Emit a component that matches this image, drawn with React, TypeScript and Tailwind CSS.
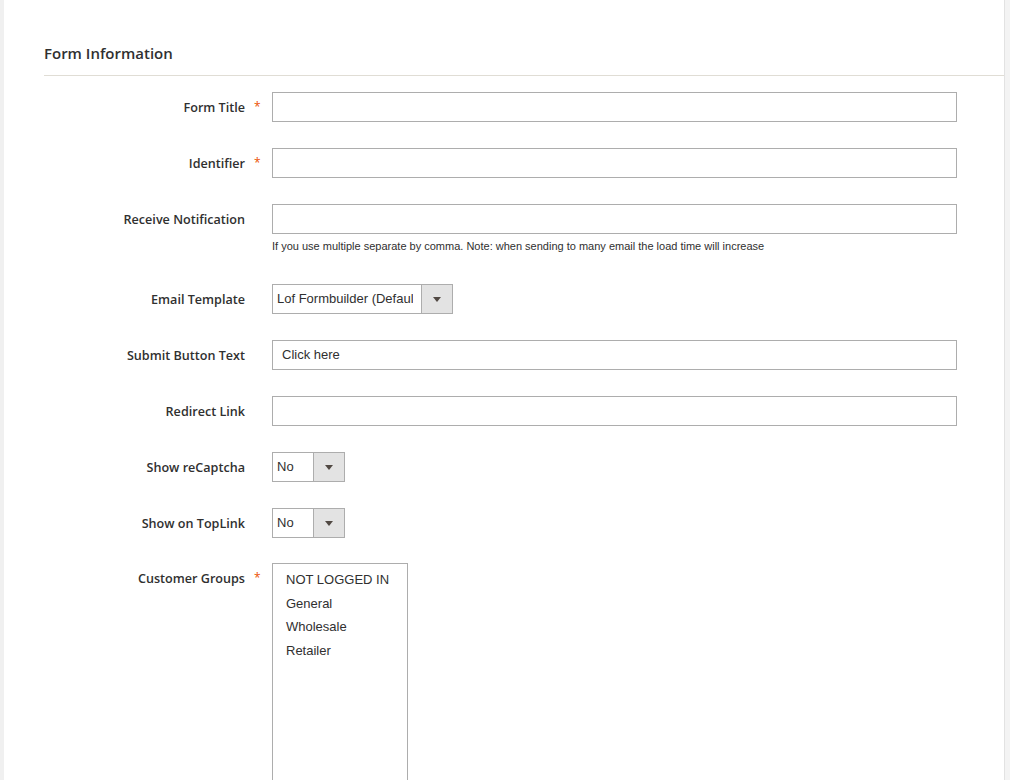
const labelFont = { fontFamily: '"Open Sans", "Liberation Sans", sans-serif' };

const Star = () => (
  <span className="text-[#eb5202] text-[12px] leading-[30px]" style={labelFont}>
    *
  </span>
);

const Row = ({
  label,
  required,
  children,
}: {
  label: string;
  required?: boolean;
  children: React.ReactNode;
}) => (
  <div className="flex items-start">
    <div
      className="w-[201px] h-[30px] pt-px text-right text-[12.6px] font-semibold leading-[30px] text-[#303030] whitespace-nowrap"
      style={labelFont}
    >
      {label}
    </div>
    <div className="w-[27px] pl-[9px] h-[30px]">{required && <Star />}</div>
    <div className="flex-1">{children}</div>
  </div>
);

const TextInput = ({ value }: { value?: string }) => (
  <div className="w-[685px] h-[30px] border border-[#adadad] bg-white pl-[9px] text-[13px] leading-[28px] text-[#303030] font-['Liberation_Sans',Arial,sans-serif]">
    {value}
  </div>
);

const Select = ({ value, width }: { value: string; width: string }) => (
  <div
    className={`${width} h-[30px] flex border border-[#adadad] bg-white text-[13px] text-[#303030] font-['Liberation_Sans',Arial,sans-serif]`}
  >
    <div className="flex-1 min-w-0 ml-[4px] mr-[8px] leading-[28px] overflow-hidden whitespace-nowrap">
      {value}
    </div>
    <div className="w-[31px] shrink-0 bg-[#e3e3e3] border-l border-[#adadad] flex items-center justify-center">
      <svg width="8" height="5" viewBox="0 0 8 5">
        <path d="M0 0 L8 0 L4 5 Z" fill="#514943" />
      </svg>
    </div>
  </div>
);

export default function App() {
  return (
    <div className="flex min-h-screen bg-white">
      <div className="w-[4px] bg-[#f0f0f0] shrink-0" />
      <div className="flex-1 pt-[43px]">
        <div className="ml-[40px] pb-[12px] border-b border-[#e0ddd5]">
          <h2
            className="text-[15px] font-semibold leading-[20px] text-[#303030]"
            style={labelFont}
          >
            Form Information
          </h2>
        </div>
        <div className="ml-[40px] pt-[16px] flex flex-col gap-[26px]">
          <Row label="Form Title" required>
            <TextInput />
          </Row>
          <Row label="Identifier" required>
            <TextInput />
          </Row>
          <Row label="Receive Notification">
            <TextInput />
            <div className="h-[24px] pt-[5px] text-[11px] leading-[14px] text-[#303030] font-['Liberation_Sans',Arial,sans-serif]">
              If you use multiple separate by comma. Note: when sending to many email the load time will increase
            </div>
          </Row>
          <Row label="Email Template">
            <Select value="Lof Formbuilder (Default)" width="w-[181px]" />
          </Row>
          <Row label="Submit Button Text">
            <TextInput value="Click here" />
          </Row>
          <Row label="Redirect Link">
            <TextInput />
          </Row>
          <Row label="Show reCaptcha">
            <Select value="No" width="w-[73px]" />
          </Row>
          <Row label="Show on TopLink">
            <Select value="No" width="w-[73px]" />
          </Row>
          <div className="-mt-px">
            <Row label="Customer Groups" required>
              <div className="w-[136px] h-[240px] border border-[#adadad] bg-white pt-[4px] pl-[13px] text-[13px] text-[#303030] font-['Liberation_Sans',Arial,sans-serif]">
                {["NOT LOGGED IN", "General", "Wholesale", "Retailer"].map((g) => (
                  <div key={g} className="leading-[23.5px]">
                    {g}
                  </div>
                ))}
              </div>
            </Row>
          </div>
        </div>
      </div>
      <div className="w-[6px] shrink-0 bg-[#f3f3f3] border-l border-[#e2e2e2]" />
    </div>
  );
}
